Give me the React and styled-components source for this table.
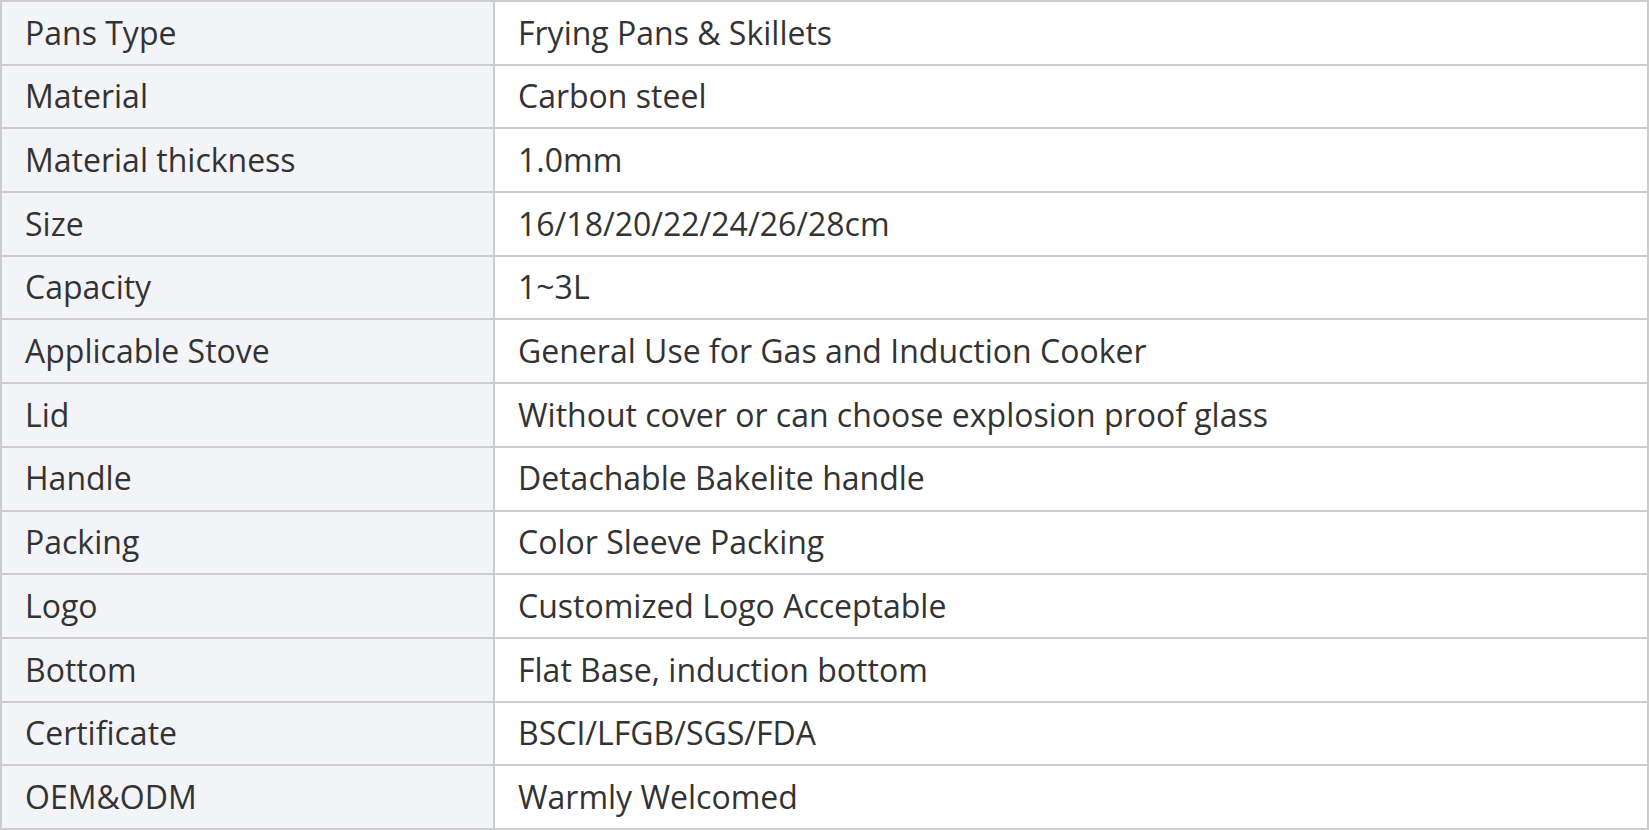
import React from "react";
import styled, { createGlobalStyle } from "styled-components";

const Global = createGlobalStyle`
  html, body { margin: 0; padding: 0; background: #ffffff; }
  body { font-family: "Open Sans", "Noto Sans", sans-serif; }
`;

const SpecTable = styled.table`
  width: 1649px;
  border-collapse: collapse;
  table-layout: fixed;
  border: 2px solid #cccccc;
  font-family: "Open Sans", "Noto Sans", sans-serif;
  font-size: 32px;
  color: #333333;
`;

const Row = styled.tr`
  height: 63.7px;
`;

const Cell = styled.td`
  border: 2px solid #cccccc;
  padding: 0 0 0 23px;
  background: ${(p) => (p.$label ? "#f3f4f8" : "#ffffff")};
  width: ${(p) => (p.$label ? "468px" : "auto")};
  vertical-align: middle;
  white-space: nowrap;
  line-height: 1.2;
`;

const rows = [
  ["Pans Type", "Frying Pans & Skillets"],
  ["Material", "Carbon steel"],
  ["Material thickness", "1.0mm"],
  ["Size", "16/18/20/22/24/26/28cm"],
  ["Capacity", "1~3L"],
  ["Applicable Stove", "General Use for Gas and Induction Cooker"],
  ["Lid", "Without cover or can choose explosion proof glass"],
  ["Handle", "Detachable Bakelite handle"],
  ["Packing", "Color Sleeve Packing"],
  ["Logo", "Customized Logo Acceptable"],
  ["Bottom", "Flat Base, induction bottom"],
  ["Certificate", "BSCI/LFGB/SGS/FDA"],
  ["OEM&ODM", "Warmly Welcomed"],
];

export default function App() {
  return (
    <>
      <Global />
      <SpecTable>
        <tbody>
          {rows.map(([k, v]) => (
            <Row key={k}>
              <Cell $label>{k}</Cell>
              <Cell>{v}</Cell>
            </Row>
          ))}
        </tbody>
      </SpecTable>
    </>
  );
}
